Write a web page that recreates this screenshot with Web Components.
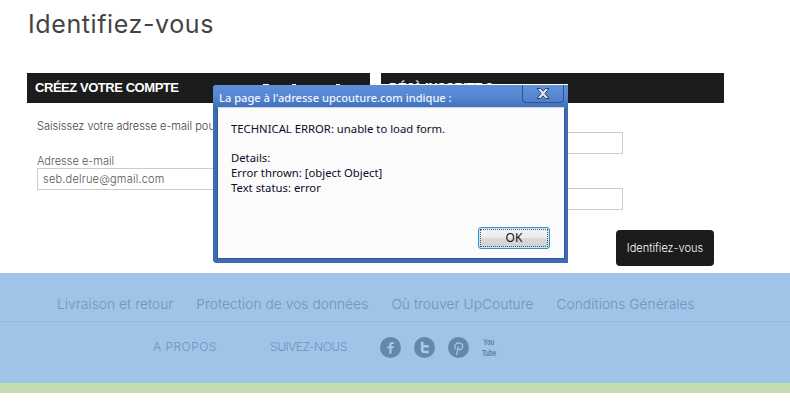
<!DOCTYPE html>
<html>
<head>
<meta charset="utf-8">
<title>Identifiez-vous</title>
<style>
    html, body { margin: 0; padding: 0; background: #fff; }
    body { height: 417px; overflow: hidden; position: relative; font-family: 'Inter', 'Liberation Sans', sans-serif; }
</style>
</head>
<body>
<login-page></login-page>
<site-footer></site-footer>
<alert-dialog title="La page à l'adresse upcouture.com indique :">
    <p>TECHNICAL ERROR: unable to load form.</p>
    <p>Details:<br>Error thrown: [object Object]<br>Text status: error</p>
</alert-dialog>

<script>
class PanelBox extends HTMLElement {
    constructor() {
        super();
        this.attachShadow({ mode: 'open' });
        this.shadowRoot.innerHTML = `
            <style>
                :host { display: block; width: 343px; }
                .head {
                    height: 30px;
                    background: #1c1c1c;
                    color: #fff;
                    font: bold 13px/29px 'Liberation Sans', sans-serif;
                    letter-spacing: -.45px;
                    padding-left: 8px;
                }
                .body { padding-left: 10px; }
            </style>
            <div class="head">${this.getAttribute('heading')}</div>
            <div class="body"><slot></slot></div>
        `;
    }
}
customElements.define('panel-box', PanelBox);

class FieldRow extends HTMLElement {
    constructor() {
        super();
        this.attachShadow({ mode: 'open' });
        const value = this.getAttribute('value') || '';
        this.shadowRoot.innerHTML = `
            <style>
                :host { display: block; }
                label { display: block; font: 300 11px/13px 'Inter', sans-serif; color: #555; }
                .box {
                    width: var(--w, 240px);
                    height: 20px;
                    border: 1px solid #ccc;
                    font: 300 11px/20px 'Inter', sans-serif;
                    letter-spacing: .2px;
                    color: #555;
                    padding-left: 5px;
                }
            </style>
            <label>${this.getAttribute('label') || '&nbsp;'}</label>
            <div class="box">${value}</div>
        `;
    }
}
customElements.define('field-row', FieldRow);

class LoginPage extends HTMLElement {
    constructor() {
        super();
        this.attachShadow({ mode: 'open' });
        this.shadowRoot.innerHTML = `
            <style>
                :host { display: block; height: 273px; box-sizing: border-box; padding: 8px 27px 0; }
                h1 {
                    margin: 0 0 0 1px;
                    font: 400 25px/32px 'Inter', sans-serif;
                    letter-spacing: .6px;
                    color: #444;
                }
                .cols { display: flex; gap: 11px; margin-top: 33px; }
                .intro { margin: 16px 0 0; font: 300 11px/14px 'Inter', sans-serif; color: #444; white-space: nowrap; }
                field-row { margin-top: 22px; }
                .right field-row { --w: 225px; }
                .right field-row:first-of-type { margin-top: 16px; }
                .right field-row + field-row { margin-top: 21px; }
                .actions { display: flex; justify-content: flex-end; margin-top: 20px; padding-right: 10px; }
                .btn {
                    width: 98px;
                    height: 36px;
                    border-radius: 4px;
                    background: #1c1c1c;
                    color: #fff;
                    font: 300 11px/36px 'Inter', sans-serif;
                    text-align: center;
                }
            </style>
            <h1>Identifiez-vous</h1>
            <div class="cols">
                <panel-box heading="CRÉEZ VOTRE COMPTE">
                    <p class="intro">Saisissez votre adresse e-mail pour</p>
                    <field-row label="Adresse e-mail" value="seb.delrue@gmail.com"></field-row>
                </panel-box>
                <panel-box class="right" heading="DÉJÀ INSCRITE ?">
                    <field-row></field-row>
                    <field-row></field-row>
                    <div class="actions"><div class="btn">Identifiez-vous</div></div>
                </panel-box>
            </div>
        `;
    }
}
customElements.define('login-page', LoginPage);

class SiteFooter extends HTMLElement {
    constructor() {
        super();
        this.attachShadow({ mode: 'open' });
        this.shadowRoot.innerHTML = `
            <style>
                :host { display: block; background: #a0c4e8; color: #6c93bd; font-family: 'Inter', sans-serif; font-weight: 300; }
                .links {
                    height: 49px;
                    box-sizing: border-box;
                    border-bottom: 1px solid #96bbe0;
                    display: flex;
                    gap: 23px;
                    padding: 23px 0 0 57px;
                    font-size: 13.7px;
                    letter-spacing: .08px;
                    line-height: 16px;
                }
                .social {
                    height: 61px;
                    box-sizing: border-box;
                    display: flex;
                    align-items: flex-start;
                    padding: 15px 0 0 153px;
                    font-size: 12px;
                    line-height: 20px;
                }
                .propos { width: 117px; letter-spacing: .5px; }
                .nous { width: 110px; letter-spacing: -.45px; }
                .icons { display: flex; gap: 13px; }
                .icons svg { display: block; width: 21px; height: 21px; }
                /* police large ecrasee pour imiter le logo etroit */
                .yt {
                    width: 29px;
                    height: 30px;
                    margin: 0 -15px 0 0;
                    font: 700 13px/15px 'Liberation Sans', sans-serif;
                    color: #5a7ea5;
                    text-align: center;
                    transform: scale(.47, .7);
                    transform-origin: left top;
                }
                .stripe { height: 10px; background: #c3dcb2; }
            </style>
            <div class="links">
                <span>Livraison et retour</span>
                <span>Protection de vos données</span>
                <span>Où trouver UpCouture</span>
                <span>Conditions Générales</span>
            </div>
            <div class="social">
                <span class="propos">A PROPOS</span>
                <span class="nous">SUIVEZ-NOUS</span>
                <div class="icons">
                    <svg viewBox="0 0 20 20"><circle cx="10" cy="10" r="10" fill="#6488ad"/><path d="M11 16V10.800h1.800l.3-2H11V7.600c0-.6.2-1 1-1h1.100V4.800c-.3 0-.9-.1-1.600-.1-1.600 0-2.600 1-2.600 2.700v1.400H7.100v2h1.800V16z" fill="#a9c6e4"/></svg>
                    <svg viewBox="0 0 20 20"><circle cx="10" cy="10" r="10" fill="#6488ad"/><path d="M6.500 4.500h2.600v3h5v2.400h-5v1.800c0 .9.500 1.300 1.400 1.300h3.600v2.500h-4.200c-2.300 0-3.400-1.200-3.400-3.300z" fill="#a9c6e4"/></svg>
                    <svg viewBox="0 0 20 20"><circle cx="10" cy="10" r="10" fill="#6488ad"/><path d="M8.200 16.500l1.500-7M7 11.200c-1.500-2.500.2-5.700 3.300-5.700 2.700 0 4 1.900 3.600 4-.4 2.300-2.600 3.400-4 1.900" fill="none" stroke="#a9c6e4" stroke-width="1.200" stroke-linecap="round"/></svg>
                    <div class="yt">You<br>Tube</div>
                </div>
            </div>
            <div class="stripe"></div>
        `;
    }
}
customElements.define('site-footer', SiteFooter);

class AlertDialog extends HTMLElement {
    constructor() {
        super();
        this.attachShadow({ mode: 'open' });
        this.shadowRoot.innerHTML = `
            <style>
                :host {
                    position: absolute;
                    left: 213px;
                    top: 84px;
                    width: 355px;
                    height: 179px;
                    box-sizing: border-box;
                    display: flex;
                    flex-direction: column;
                    padding: 0 3px 4px 4px;
                    background: linear-gradient(#5f8fd8 0, #5586d2 12px, #3d6cb5 24px, #3d6cb5 100%) padding-box;
                    border-top: 1px solid transparent;
                    border-radius: 3px 0 0 3px;
                    font-family: 'Noto Sans', 'Open Sans', sans-serif;
                }
                .edge {
                    position: absolute;
                    left: 3px;
                    right: 0;
                    top: -1px;
                    height: 1px;
                    background: linear-gradient(90deg, transparent 47px, #fff 47px, #fff 53px, transparent 53px, transparent 76px, #fff 76px, #fff 80px, transparent 80px, transparent 120px, #fff 120px, #fff 124px, transparent 124px, transparent 165px, #fff 165px);
                }
                .bar { height: 22px; display: flex; justify-content: space-between; color: #fff; }
                .title { font: 500 11.1px/23px 'Noto Sans', sans-serif; padding: 1px 0 0 2px; color: #eef4fc; }
                .close {
                    width: 42px;
                    height: 18px;
                    box-sizing: border-box;
                    margin: 0 1px 0 0;
                    border: 1px solid #2f5488;
                    border-top: 0;
                    border-radius: 0 0 4px 4px;
                    background: linear-gradient(#6494dc, #4f80ca);
                    display: flex;
                    align-items: center;
                    justify-content: center;
                }
                .client {
                    flex: 1;
                    background: #fbfbfb;
                    border: 1px solid #2d5a9c;
                    border-top-color: #c7d9f0;
                    display: flex;
                    flex-direction: column;
                    padding: 13px 14px 9px 13px;
                    color: #16082a;
                    font: 11.3px/15px 'Noto Sans', sans-serif;
                }
                .msg { flex: 1; }
                ::slotted(p) { margin: 0 0 14px; }
                .ok-row { display: flex; justify-content: flex-end; }
                .ok {
                    width: 72px;
                    height: 22px;
                    box-sizing: border-box;
                    border: 1px solid #2f93c8;
                    border-radius: 3px;
                    background: linear-gradient(#f4f4f4 0, #ececec 48%, #d9d9d9 52%, #cfcfcf 100%);
                    box-shadow: inset 0 0 0 1px #c8eaf8;
                    text-align: center;
                    font: 12px/20px 'Noto Sans', sans-serif;
                    color: #111;
                    outline: 1px dotted #555;
                    outline-offset: -3px;
                }
            </style>
            <div class="edge"></div>
            <div class="bar">
                <span class="title">${this.getAttribute('title')}</span>
                <div class="close">
                    <svg width="14" height="11" viewBox="0 0 14 11"><path d="M1 .5h3.500L7 3.200 9.500.5H13L9 5.500l4 5H9.500L7 7.800 4.500 10.500H1l4-5z" fill="#dfe6f2" stroke="#27406a" stroke-width="1"/></svg>
                </div>
            </div>
            <div class="client">
                <div class="msg"><slot></slot></div>
                <div class="ok-row"><div class="ok">OK</div></div>
            </div>
        `;
    }
}
customElements.define('alert-dialog', AlertDialog);
</script>
</body>
</html>
